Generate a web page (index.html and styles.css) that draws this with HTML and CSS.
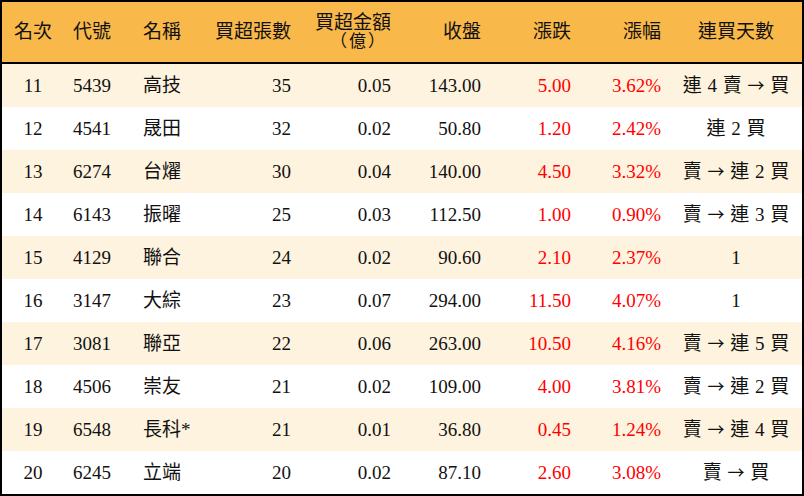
FILE: index.html
```html
<!DOCTYPE html>
<html lang="zh-Hant">
<head>
<meta charset="utf-8">
<link rel="stylesheet" href="styles.css">
</head>
<body>
<div class="board">
  <div class="row head">
    <div class="c c1">名次</div>
    <div class="c c2">代號</div>
    <div class="c c3">名稱</div>
    <div class="c r">買超張數</div>
    <div class="c r two"><span class="ln">買超金額</span><span class="ln paren">（億）</span></div>
    <div class="c r">收盤</div>
    <div class="c r">漲跌</div>
    <div class="c r">漲幅</div>
    <div class="c c9">連買天數</div>
  </div>
  <div class="row alt">
    <div class="c c1">11</div><div class="c c2">5439</div><div class="c c3">高技</div>
    <div class="c r">35</div><div class="c r">0.05</div><div class="c r">143.00</div>
    <div class="c r up">5.00</div><div class="c r up">3.62%</div><div class="c c9">連 4 賣 <span class="arr">→</span> 買</div>
  </div>
  <div class="row">
    <div class="c c1">12</div><div class="c c2">4541</div><div class="c c3">晟田</div>
    <div class="c r">32</div><div class="c r">0.02</div><div class="c r">50.80</div>
    <div class="c r up">1.20</div><div class="c r up">2.42%</div><div class="c c9">連 2 買</div>
  </div>
  <div class="row alt">
    <div class="c c1">13</div><div class="c c2">6274</div><div class="c c3">台燿</div>
    <div class="c r">30</div><div class="c r">0.04</div><div class="c r">140.00</div>
    <div class="c r up">4.50</div><div class="c r up">3.32%</div><div class="c c9">賣 <span class="arr">→</span> 連 2 買</div>
  </div>
  <div class="row">
    <div class="c c1">14</div><div class="c c2">6143</div><div class="c c3">振曜</div>
    <div class="c r">25</div><div class="c r">0.03</div><div class="c r">112.50</div>
    <div class="c r up">1.00</div><div class="c r up">0.90%</div><div class="c c9">賣 <span class="arr">→</span> 連 3 買</div>
  </div>
  <div class="row alt">
    <div class="c c1">15</div><div class="c c2">4129</div><div class="c c3">聯合</div>
    <div class="c r">24</div><div class="c r">0.02</div><div class="c r">90.60</div>
    <div class="c r up">2.10</div><div class="c r up">2.37%</div><div class="c c9">1</div>
  </div>
  <div class="row">
    <div class="c c1">16</div><div class="c c2">3147</div><div class="c c3">大綜</div>
    <div class="c r">23</div><div class="c r">0.07</div><div class="c r">294.00</div>
    <div class="c r up">11.50</div><div class="c r up">4.07%</div><div class="c c9">1</div>
  </div>
  <div class="row alt">
    <div class="c c1">17</div><div class="c c2">3081</div><div class="c c3">聯亞</div>
    <div class="c r">22</div><div class="c r">0.06</div><div class="c r">263.00</div>
    <div class="c r up">10.50</div><div class="c r up">4.16%</div><div class="c c9">賣 <span class="arr">→</span> 連 5 買</div>
  </div>
  <div class="row">
    <div class="c c1">18</div><div class="c c2">4506</div><div class="c c3">崇友</div>
    <div class="c r">21</div><div class="c r">0.02</div><div class="c r">109.00</div>
    <div class="c r up">4.00</div><div class="c r up">3.81%</div><div class="c c9">賣 <span class="arr">→</span> 連 2 買</div>
  </div>
  <div class="row alt">
    <div class="c c1">19</div><div class="c c2">6548</div><div class="c c3">長科*</div>
    <div class="c r">21</div><div class="c r">0.01</div><div class="c r">36.80</div>
    <div class="c r up">0.45</div><div class="c r up">1.24%</div><div class="c c9">賣 <span class="arr">→</span> 連 4 買</div>
  </div>
  <div class="row">
    <div class="c c1">20</div><div class="c c2">6245</div><div class="c c3">立端</div>
    <div class="c r">20</div><div class="c r">0.02</div><div class="c r">87.10</div>
    <div class="c r up">2.60</div><div class="c r up">3.08%</div><div class="c c9">賣 <span class="arr">→</span> 買</div>
  </div>
</div>
</body>
</html>
```
FILE: styles.css
```css
html, body {
  margin: 0;
  padding: 0;
  background: #ffffff;
}
.board {
  width: 800px;
  border: 2px solid #000000;
  font-family: "Liberation Serif", "Noto Sans CJK TC", serif;
  font-size: 19px;
  color: #111111;
  background: #ffffff;
}
.row {
  display: grid;
  grid-template-columns: 62px 70px 70px 96px 100px 90px 90px 90px 132px;
  height: 43px;
  align-items: center;
}
.row.head {
  height: 60px;
  background: #f9b84a;
  border-bottom: 2px solid #000000;
}
.row.alt {
  background: #fef3de;
}
.c {
  white-space: nowrap;
  line-height: 22px;
}
.c1 {
  text-align: center;
}
.c2, .c3 {
  padding-left: 9px;
}
.r {
  text-align: right;
  padding-right: 9px;
}
.two {
  display: flex;
  flex-direction: column;
  align-items: flex-end;
  gap: 0;
}
.ln {
  display: block;
  line-height: 19px;
  height: 19px;
}
.paren {
  font-size: 17px;
  letter-spacing: 2px;
  margin-right: 4px;
}
.c9 {
  text-align: center;
  word-spacing: 1px;
}
.arr {
  font-family: "Noto Sans CJK TC", sans-serif;
  font-size: 17px;
}
.up {
  color: #ff0000;
}
```
